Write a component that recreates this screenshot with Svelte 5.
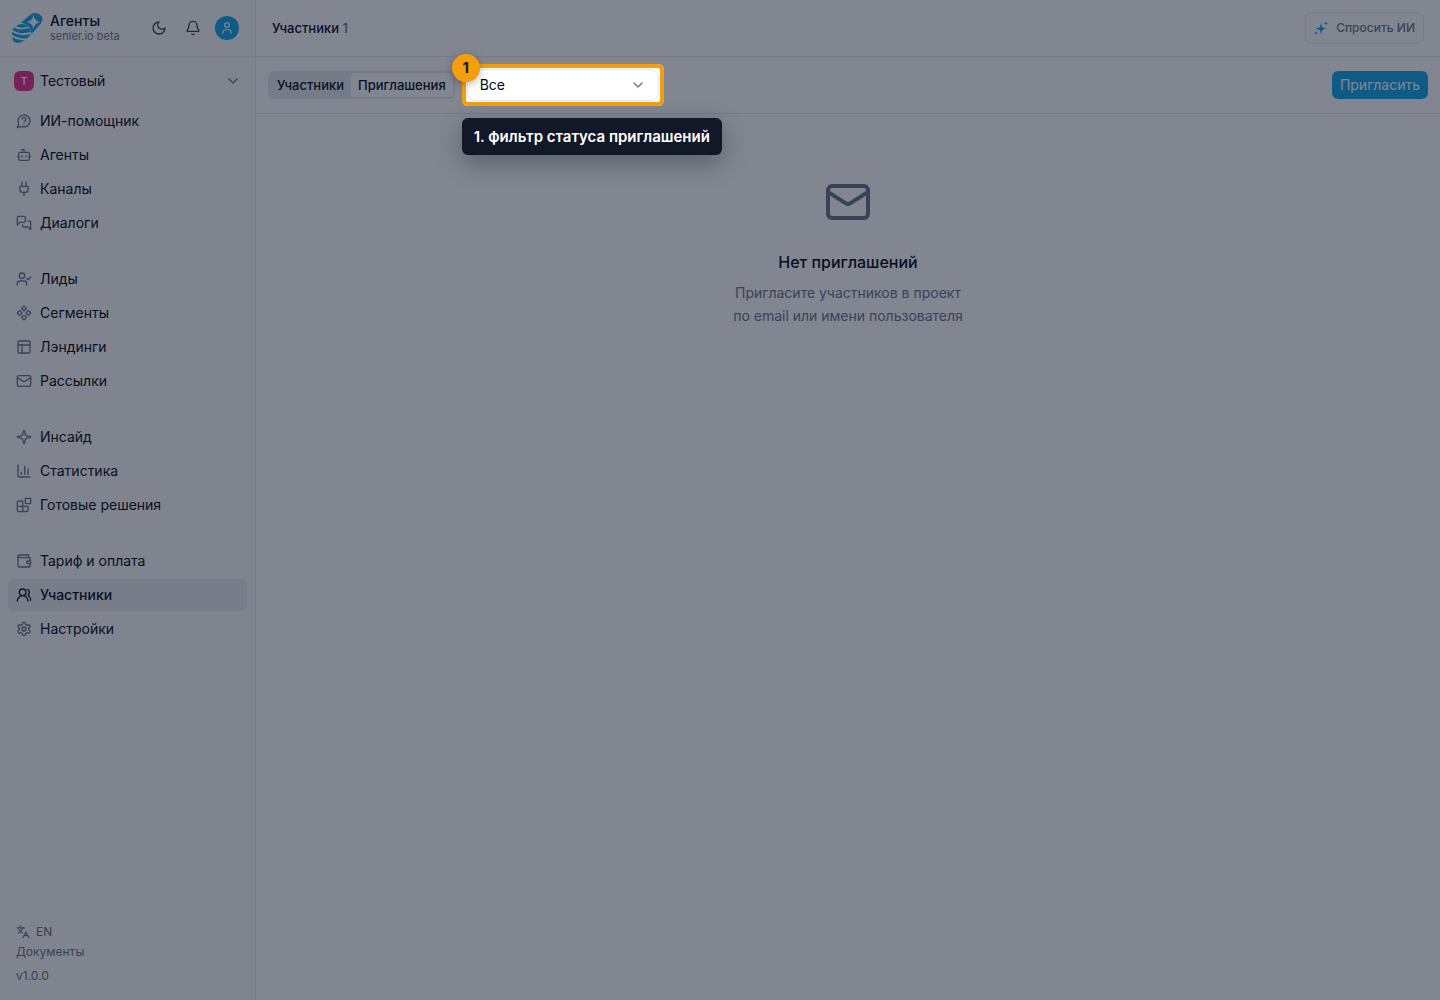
<script>
  const groups = [
    [
      { label: 'ИИ-помощник', icon: 'help' },
      { label: 'Агенты', icon: 'bot' },
      { label: 'Каналы', icon: 'plug' },
      { label: 'Диалоги', icon: 'chats' }
    ],
    [
      { label: 'Лиды', icon: 'userCheck' },
      { label: 'Сегменты', icon: 'segments' },
      { label: 'Лэндинги', icon: 'layout' },
      { label: 'Рассылки', icon: 'mail' }
    ],
    [
      { label: 'Инсайд', icon: 'sparkle' },
      { label: 'Статистика', icon: 'chart' },
      { label: 'Готовые решения', icon: 'blocks' }
    ],
    [
      { label: 'Тариф и оплата', icon: 'wallet' },
      { label: 'Участники', icon: 'users', active: true },
      { label: 'Настройки', icon: 'gear' }
    ]
  ];

  const icons = {
    help: ['M7.9 20A9 9 0 1 0 4 16.1L2 22Z', 'M9.09 9a3 3 0 0 1 5.83 1c0 2-3 3-3 3', 'M12 17h.01'],
    bot: ['M12 8V4H8', 'M6 8h12a2 2 0 0 1 2 2v8a2 2 0 0 1-2 2H6a2 2 0 0 1-2-2v-8a2 2 0 0 1 2-2z', 'M2 14h2', 'M20 14h2', 'M15 13v2', 'M9 13v2'],
    plug: ['M12 22v-5', 'M9 8V2', 'M15 8V2', 'M18 8v5a4 4 0 0 1-4 4h-4a4 4 0 0 1-4-4V8Z'],
    chats: ['M14 9a2 2 0 0 1-2 2H6l-4 4V4a2 2 0 0 1 2-2h8a2 2 0 0 1 2 2z', 'M18 9h2a2 2 0 0 1 2 2v11l-4-4h-6a2 2 0 0 1-2-2v-1'],
    userCheck: ['M2 21v-2a4 4 0 0 1 4-4h6a4 4 0 0 1 4 4v2', 'M13 7a4 4 0 1 1-8 0a4 4 0 1 1 8 0', 'M16 11l2 2 4-4'],
    segments: [
      'M15.536 11.293a1 1 0 0 0 0 1.414l2.376 2.377a1 1 0 0 0 1.414 0l2.377-2.377a1 1 0 0 0 0-1.414l-2.377-2.377a1 1 0 0 0-1.414 0z',
      'M2.297 11.293a1 1 0 0 0 0 1.414l2.377 2.377a1 1 0 0 0 1.414 0l2.377-2.377a1 1 0 0 0 0-1.414L6.088 8.916a1 1 0 0 0-1.414 0z',
      'M8.916 17.912a1 1 0 0 0 0 1.415l2.377 2.376a1 1 0 0 0 1.414 0l2.377-2.376a1 1 0 0 0 0-1.415l-2.377-2.376a1 1 0 0 0-1.414 0z',
      'M8.916 4.674a1 1 0 0 0 0 1.414l2.377 2.376a1 1 0 0 0 1.414 0l2.377-2.376a1 1 0 0 0 0-1.414l-2.377-2.377a1 1 0 0 0-1.414 0z'
    ],
    layout: ['M5 3h14a2 2 0 0 1 2 2v14a2 2 0 0 1-2 2H5a2 2 0 0 1-2-2V5a2 2 0 0 1 2-2z', 'M3 9h18', 'M9 21V9'],
    mail: ['M4 4h16a2 2 0 0 1 2 2v12a2 2 0 0 1-2 2H4a2 2 0 0 1-2-2V6a2 2 0 0 1 2-2z', 'm22 7-8.97 5.7a1.94 1.94 0 0 1-2.06 0L2 7'],
    sparkle: ['M9.937 15.5A2 2 0 0 0 8.5 14.063l-6.135-1.582a.5.5 0 0 1 0-.962L8.5 9.936A2 2 0 0 0 9.937 8.5l1.582-6.135a.5.5 0 0 1 .963 0L14.063 8.5A2 2 0 0 0 15.5 9.937l6.135 1.581a.5.5 0 0 1 0 .964L15.5 14.063a2 2 0 0 0-1.437 1.437l-1.582 6.135a.5.5 0 0 1-.963 0z'],
    chart: ['M3 3v16a2 2 0 0 0 2 2h16', 'M18 17V9', 'M13 17V5', 'M8 17v-3'],
    blocks: ['M15 2h6a1 1 0 0 1 1 1v6a1 1 0 0 1-1 1h-6a1 1 0 0 1-1-1V3a1 1 0 0 1 1-1z', 'M10 22V7a1 1 0 0 0-1-1H4a2 2 0 0 0-2 2v12a2 2 0 0 0 2 2h12a2 2 0 0 0 2-2v-5a1 1 0 0 0-1-1H2'],
    wallet: ['M19 7V4a1 1 0 0 0-1-1H5a2 2 0 0 0 0 4h15a1 1 0 0 1 1 1v4h-3a2 2 0 0 0 0 4h3a1 1 0 0 0 1-1v-2a1 1 0 0 0-1-1', 'M3 5v14a2 2 0 0 0 2 2h15a1 1 0 0 0 1-1v-4'],
    users: ['M18 21a8 8 0 0 0-16 0', 'M15 8a5 5 0 1 1-10 0a5 5 0 1 1 10 0', 'M22 20c0-3.37-2-6.5-4-8a5 5 0 0 0-.45-8.3'],
    gear: ['M12.22 2h-.44a2 2 0 0 0-2 2v.18a2 2 0 0 1-1 1.73l-.43.25a2 2 0 0 1-2 0l-.15-.08a2 2 0 0 0-2.73.73l-.22.38a2 2 0 0 0 .73 2.73l.15.1a2 2 0 0 1 1 1.72v.51a2 2 0 0 1-1 1.74l-.15.09a2 2 0 0 0-.73 2.73l.22.38a2 2 0 0 0 2.73.73l.15-.08a2 2 0 0 1 2 0l.43.25a2 2 0 0 1 1 1.73V20a2 2 0 0 0 2 2h.44a2 2 0 0 0 2-2v-.18a2 2 0 0 1 1-1.73l.43-.25a2 2 0 0 1 2 0l.15.08a2 2 0 0 0 2.73-.73l.22-.39a2 2 0 0 0-.73-2.73l-.15-.08a2 2 0 0 1-1-1.74v-.5a2 2 0 0 1 1-1.74l.15-.09a2 2 0 0 0 .73-2.73l-.22-.38a2 2 0 0 0-2.73-.73l-.15.08a2 2 0 0 1-2 0l-.43-.25a2 2 0 0 1-1-1.73V4a2 2 0 0 0-2-2z', 'M15 12a3 3 0 1 1-6 0a3 3 0 1 1 6 0'],
    moon: ['M12 3a6 6 0 0 0 9 9 9 9 0 1 1-9-9Z'],
    bell: ['M10.268 21a2 2 0 0 0 3.464 0', 'M3.262 15.326A1 1 0 0 0 4 17h16a1 1 0 0 0 .74-1.673C19.41 13.956 18 12.499 18 8A6 6 0 0 0 6 8c0 4.499-1.411 5.956-2.738 7.326'],
    person: ['M16 7a4 4 0 1 1-8 0a4 4 0 1 1 8 0', 'M5 21v-2a4 4 0 0 1 4-4h6a4 4 0 0 1 4 4v2'],
    chevron: ['m6 9 6 6 6-6'],
    translate: ['m5 8 6 6', 'm4 14 6-6 2-3', 'M2 5h12', 'M7 2h1', 'm22 22-5-10-5 10', 'M14 18h6']
  };

  let status = $state('Все');
</script>

{#snippet icon(name, cls = '')}
  <svg class="icon {cls}" viewBox="0 0 24 24" aria-hidden="true">
    {#each icons[name] as d}<path {d} />{/each}
  </svg>
{/snippet}

<div class="app">
  <aside class="sidebar">
    <header class="brand">
      <svg class="logo" viewBox="0 0 32 32" aria-hidden="true">
        <path d="M10 10.500 19 3Q23 -0.500 28 2Q33.500 5.500 30 11.500L20.500 22Q20 13 10 10.500Z" />
        <path class="cut" d="M22.500 3Q23.500 9 29.500 10Q23.500 11 22.500 17Q21.500 11 15.500 10Q21.500 9 22.500 3Z" />
        <path d="M5 14Q11 10 17 14.500Q10 17 5 14Z" />
        <path d="M3 15.500Q8 19 18 16Q20 18 19.500 20Q8 23 1.500 18Z" />
        <path d="M1 20Q9 25 19.500 22Q18 25 16 26.500Q7 27 1 22.500Z" />
        <path d="M1 25Q7 29 14 28Q8 33 2.500 29.500Z" />
      </svg>
      <div class="brand-text">
        <strong>Агенты</strong>
        <span>senler.io beta</span>
      </div>
      <div class="brand-actions">
        <button aria-label="Тёмная тема">{@render icon('moon')}</button>
        <button aria-label="Уведомления">{@render icon('bell')}</button>
        <button class="avatar" aria-label="Профиль">{@render icon('person', 'small')}</button>
      </div>
    </header>

    <button class="project">
      <span class="project-badge">Т</span>
      <span class="project-name">Тестовый</span>
      {@render icon('chevron')}
    </button>

    <nav>
      {#each groups as group}
        <ul>
          {#each group as item}
            <li>
              <a href="#top" class:active={item.active} aria-current={item.active ? 'page' : undefined}>
                {@render icon(item.icon)}
                <span>{item.label}</span>
              </a>
            </li>
          {/each}
        </ul>
      {/each}
    </nav>

    <footer>
      <button class="lang">{@render icon('translate', 'small')}EN</button>
      <a href="#docs">Документы</a>
      <span class="version">v1.0.0</span>
    </footer>
  </aside>

  <main>
    <header class="topbar">
      <h1>Участники <span>1</span></h1>
      <button class="ask">
        <svg class="stars" viewBox="0 0 24 24" aria-hidden="true">
          <path d="M12 2Q13 9.500 14.500 10.500Q16 12 22 13Q16 14 14.500 15.500Q13 16.500 12 23Q11 16.500 9.500 15.500Q8 14 2 13Q8 12 9.500 10.500Q11 9.500 12 2Z" />
          <path d="M20.500 1 21.500 3 23.500 4 21.500 5 20.500 7 19.500 5 17.500 4 19.500 3Z" />
          <path d="M3.500 17.500 4.500 19.500 6.500 20.500 4.500 21.500 3.500 23.500 2.500 21.500 0.500 20.500 2.500 19.500Z" />
        </svg>
        Спросить ИИ
      </button>
    </header>

    <section class="toolbar">
      <div class="tabs" role="tablist">
        <button role="tab" aria-selected="false">Участники</button>
        <button role="tab" aria-selected="true" class="selected">Приглашения</button>
      </div>
      <div class="filter">
        <select aria-label="Статус приглашений" bind:value={status}>
          <option>Все</option>
        </select>
        {@render icon('chevron')}
        <div class="spotlight"></div>
        <span class="step">1</span>
        <div class="hint" role="tooltip">1. фильтр статуса приглашений</div>
      </div>
      <button class="invite">Пригласить</button>
    </section>

    <section class="empty">
      {@render icon('mail', 'large')}
      <h2>Нет приглашений</h2>
      <p>Пригласите участников в проект<br />по email или имени пользователя</p>
    </section>
  </main>
</div>

<style>
  :global(body) {
    margin: 0;
    overflow-x: hidden;
  }
  .app {
    display: flex;
    min-height: 100vh;
    font-family: Inter, sans-serif;
    font-size: 14px;
    line-height: 20px;
    color: #020817;
    background: #fff;
  }
  .app * {
    box-sizing: border-box;
  }
  button,
  select {
    font: inherit;
    color: inherit;
    background: none;
    border: 0;
    padding: 0;
    cursor: pointer;
  }
  a {
    color: inherit;
    text-decoration: none;
  }
  .icon {
    width: 16px;
    height: 16px;
    flex: none;
    fill: none;
    stroke: currentColor;
    stroke-width: 2;
    stroke-linecap: round;
    stroke-linejoin: round;
    color: #64748b;
  }
  .icon.small {
    width: 14px;
    height: 14px;
  }
  .icon.large {
    width: 48px;
    height: 48px;
  }
  .sidebar {
    width: 256px;
    flex: none;
    display: flex;
    flex-direction: column;
    background: #fafafa;
    border-right: 1px solid #e2e8f0;
  }
  .brand {
    display: flex;
    align-items: center;
    gap: 7px;
    height: 57px;
    padding: 0 16px 0 11px;
    border-bottom: 1px solid #e2e8f0;
  }
  .logo {
    width: 32px;
    height: 32px;
    fill: #0ea5e9;
  }
  .logo .cut {
    fill: #fafafa;
  }
  .brand-text {
    display: flex;
    flex-direction: column;
  }
  .brand-text strong {
    font-weight: 500;
    line-height: 16px;
  }
  .brand-text span {
    font-size: 11px;
    line-height: 14px;
    color: #64748b;
  }
  .brand-actions {
    display: flex;
    align-items: center;
    gap: 10px;
    margin-left: auto;
  }
  .brand-actions button {
    display: grid;
    place-items: center;
    width: 24px;
    height: 24px;
  }
  .brand-actions .icon {
    color: #334155;
  }
  .brand-actions .avatar {
    border-radius: 50%;
    background: #0ea5e9;
  }
  .brand-actions .avatar .icon {
    color: #fff;
  }
  .project {
    display: flex;
    align-items: center;
    gap: 6px;
    height: 48px;
    padding: 0 14px;
    text-align: left;
  }
  .project-badge {
    display: grid;
    place-items: center;
    width: 20px;
    height: 20px;
    border-radius: 6px;
    background: #e92a8c;
    color: #fff;
    font-size: 11px;
    font-weight: 500;
  }
  .project-name {
    flex: 1;
  }
  nav {
    display: flex;
    flex-direction: column;
    gap: 24px;
    padding: 0 8px;
  }
  ul {
    display: flex;
    flex-direction: column;
    gap: 2px;
    margin: 0;
    padding: 0;
    list-style: none;
  }
  nav a {
    display: flex;
    align-items: center;
    gap: 8px;
    height: 32px;
    padding: 0 8px;
    border-radius: 6px;
  }
  nav a.active {
    background: #e8eef3;
    font-weight: 500;
  }
  nav a.active .icon {
    color: inherit;
  }
  footer {
    display: flex;
    flex-direction: column;
    align-items: flex-start;
    margin-top: auto;
    padding: 0 16px 12px;
    font-size: 12px;
    color: #64748b;
  }
  .lang {
    display: flex;
    align-items: center;
    gap: 6px;
  }
  .version {
    line-height: 24px;
    margin-top: 2px;
  }
  main {
    flex: 1;
    min-width: 0;
  }
  .topbar {
    display: flex;
    align-items: center;
    justify-content: space-between;
    height: 57px;
    padding: 0 16px;
    border-bottom: 1px solid #e2e8f0;
  }
  h1 {
    margin: 0;
    font-size: 13px;
    font-weight: 500;
  }
  h1 span {
    color: #64748b;
  }
  .ask {
    display: flex;
    align-items: center;
    gap: 8px;
    height: 32px;
    padding: 0 8px;
    border: 1px solid #e2e8f0;
    border-radius: 8px;
    font-size: 12px;
    font-weight: 500;
    color: #64748b;
  }
  .stars {
    width: 14px;
    height: 14px;
    fill: #0ea5e9;
  }
  .toolbar {
    display: flex;
    align-items: center;
    height: 57px;
    padding: 0 12px;
    border-bottom: 1px solid #e2e8f0;
  }
  .tabs {
    display: flex;
    height: 28px;
    padding: 2px;
    border-radius: 6px;
    background: #e2e8f0;
    font-size: 13px;
    font-weight: 500;
  }
  .tabs button {
    padding: 0 7px;
    border-radius: 4px;
  }
  .tabs .selected {
    background: #fff;
  }
  .filter {
    position: relative;
    display: flex;
    align-items: center;
    width: 192px;
    margin-left: 12px;
  }
  .filter select {
    appearance: none;
    width: 100%;
    height: 32px;
    padding: 0 12px;
    border: 1px solid #e2e8f0;
    border-radius: 8px;
    background: #fff;
  }
  .filter .icon {
    position: absolute;
    right: 13px;
    pointer-events: none;
  }
  .spotlight {
    position: absolute;
    z-index: 1;
    inset: -5px;
    border: 4px solid #f59e0b;
    border-radius: 6px;
    box-shadow: 0 0 0 9999px rgba(15, 23, 42, 0.52);
    pointer-events: none;
  }
  .step {
    position: absolute;
    z-index: 2;
    top: -15px;
    left: -15px;
    display: grid;
    place-items: center;
    width: 28px;
    height: 28px;
    border-radius: 50%;
    background: #f59e0b;
    color: #111827;
    font-size: 15px;
    font-weight: 700;
    box-shadow: 0 2px 8px rgba(0, 0, 0, 0.3);
  }
  .hint {
    position: absolute;
    z-index: 2;
    top: 49px;
    left: -5px;
    padding: 8px 12px;
    border-radius: 6px;
    background: #111827;
    color: #fff;
    font-size: 15px;
    font-weight: 600;
    line-height: 21px;
    white-space: nowrap;
    box-shadow: 0 8px 24px rgba(15, 23, 42, 0.35);
  }
  .invite {
    height: 28px;
    margin-left: auto;
    padding: 0 8px;
    border-radius: 6px;
    background: #0ea5e9;
    color: #fff;
  }
  .empty {
    display: flex;
    flex-direction: column;
    align-items: center;
    padding: 64px 24px;
    text-align: center;
  }
  h2 {
    margin: 24px 0 7px;
    font-size: 16px;
    font-weight: 500;
    line-height: 24px;
  }
  p {
    margin: 0;
    line-height: 23px;
    color: #64748b;
  }
</style>
